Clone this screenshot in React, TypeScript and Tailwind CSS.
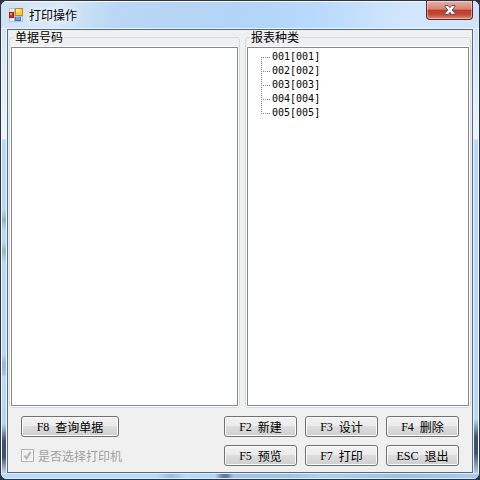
import type { ReactNode } from 'react'

interface ReportType {
  id: string
  name: string
}

const reports: ReportType[] = [
  { id: '001', name: '001' },
  { id: '002', name: '002' },
  { id: '003', name: '003' },
  { id: '004', name: '004' },
  { id: '005', name: '005' },
]

const actions = [
  { hotkey: 'F2', label: '新建' },
  { hotkey: 'F3', label: '设计' },
  { hotkey: 'F4', label: '删除' },
  { hotkey: 'F5', label: '预览' },
  { hotkey: 'F7', label: '打印' },
  { hotkey: 'ESC', label: '退出' },
]

function FormIcon() {
  return (
    <svg width="14" height="14" viewBox="0 0 14 14" shapeRendering="crispEdges" aria-hidden="true">
      <rect width="14" height="14" fill="#b9bec4" />
      <rect x="1" y="1" width="4" height="3" fill="#e9eef4" />
      <rect x="1" y="10" width="4" height="3" fill="#eef2f7" />
      <rect x="12" y="9" width="1" height="4" fill="#eef2f7" />
      <rect x="0" y="4" width="5" height="6" fill="#a31f14" />
      <rect x="1" y="5" width="3" height="4" fill="#c93324" />
      <rect x="1" y="5" width="2" height="2" fill="#f08a7c" />
      <rect x="6" y="0" width="8" height="8" fill="#c58a10" />
      <rect x="7" y="1" width="6" height="6" fill="#fbcb3d" />
      <rect x="7" y="1" width="4" height="3" fill="#ffe793" />
      <rect x="6" y="9" width="6" height="4" fill="#3f6fd0" />
      <rect x="7" y="9" width="4" height="3" fill="#6ea2f2" />
    </svg>
  )
}

function TitleBar() {
  return (
    <header className="flex h-7 items-start justify-between bg-[linear-gradient(100deg,#cfe2f6_0%,#d8e8f9_12%,#bad7f4_24%,#b1d4f7_50%,#b8dafc_66%,#d3e6fd_85%,#cfe4fb_100%)] pl-2 pr-[6px] shadow-[inset_0_1px_0_#f5faff,inset_0_-1px_0_#e4f4fb]">
      <div className="flex h-7 items-center gap-[6px]">
        <FormIcon />
        <h1 className="text-[12px] leading-4 [text-shadow:0_0_6px_#fff,0_0_8px_#fff]">打印操作</h1>
      </div>
      <button
        type="button"
        aria-label="关闭"
        className="flex h-[19px] w-[47px] items-center justify-center rounded-b-[4px] border border-t-0 border-[#5d2626] bg-[linear-gradient(#e9b0a5_0%,#d78276_46%,#b93c2a_50%,#c34a36_75%,#dc8b72_100%)] shadow-[inset_0_0_0_1px_#ffffff66]"
      >
        <svg width="12" height="10" viewBox="0 0 12 10" aria-hidden="true">
          <path
            d="M1 .5H4.2L6 2.7 7.8.5H11V1.5L8.2 5 11 8.5V9.5H7.8L6 7.3 4.2 9.5H1V8.5L3.8 5 1 1.5Z"
            fill="#fff"
            stroke="#535666"
            strokeWidth="1"
          />
        </svg>
      </button>
    </header>
  )
}

function Branch({ first, last }: { first: boolean; last: boolean }) {
  return (
    <svg width="10" height="14" viewBox="0 0 10 14" shapeRendering="crispEdges" aria-hidden="true">
      <path
        d={`M.5 ${first ? 8 : 0}V${last ? 9 : 14}M2 8.5H10`}
        fill="none"
        stroke="#808080"
        strokeDasharray="1 1"
      />
    </svg>
  )
}

function Group({ title, children }: { title: string; children?: ReactNode }) {
  return (
    <fieldset className="flex min-w-0 flex-col rounded-[3px] border border-[#d0dce4] px-px pb-px">
      <legend className="ml-[3px] px-px text-[12px] leading-[14px]">{title}</legend>
      <div className="mt-[3px] flex-1 border border-[#828790] bg-white shadow-[0_0_0_1px_#fff]">{children}</div>
    </fieldset>
  )
}

function Button({ hotkey, label }: { hotkey: string; label: string }) {
  return (
    <button
      type="button"
      className="flex h-[21px] w-full items-center justify-center gap-[6px] rounded-[3px] border border-[#707070] bg-[linear-gradient(#f2f2f2_0%,#ebebeb_49%,#dddddd_50%,#cfcfcf_100%)] text-[12px] leading-4 whitespace-nowrap shadow-[inset_0_0_0_1px_#fcfcfc]"
    >
      <span className="font-['Liberation_Serif',serif]">{hotkey}</span>
      <span>{label}</span>
    </button>
  )
}

export default function App() {
  return (
    <div className="bg-[#30343f] font-['Noto_Sans_CJK_SC',sans-serif] text-black">
      <div className="flex min-h-screen flex-col overflow-hidden rounded-[7px] border border-[#30343f] bg-[#b8dafc]">
        <TitleBar />
        <div className="flex flex-1">
          <div className="w-[6px] border-x border-[#eef6ff] bg-[linear-gradient(#d5e5f6_0px,#eff5fc_110px,#b8dafc_111px,#b8dafc_180px,#8fb8bd_191px,#b8dafc_202px,#b8dafc_213px,#93bac0_222px,#b8dafc_234px,#b8dafc_325px,#9ab8d3_334px,#a5c3df_345px,#b8dafc_348px,#b4d4f5_395px,#41526e_412px,#41526e_428px,#b1d0f0_443px)]" />
          <main className="flex min-w-0 flex-1 flex-col border border-[#5a6b78] bg-[#f0f0f0]">
            <div className="grid flex-1 grid-cols-[231fr_226fr] gap-[5px] px-px">
              <Group title="单据号码" />
              <Group title="报表种类">
                <ul className="pt-px pl-[13px] font-['DejaVu_Sans_Mono',monospace] text-[10px] leading-[15px]">
                  {reports.map((r, i) => (
                    <li key={r.id} className="flex h-[14px] gap-px">
                      <Branch first={i === 0} last={i === reports.length - 1} />
                      <span>{`${r.id}[${r.name}]`}</span>
                    </li>
                  ))}
                </ul>
              </Group>
            </div>
            <div className="flex justify-between px-[13px] pt-[8px] pb-[6px]">
              <div className="flex w-[98px] flex-col gap-2">
                <Button hotkey="F8" label="查询单据" />
                <label className="flex h-[21px] items-center gap-1 text-[12px] leading-4 whitespace-nowrap text-[#a0a0a0]">
                  <span className="grid shrink-0">
                    <input
                      type="checkbox"
                      checked
                      readOnly
                      disabled
                      className="col-start-1 row-start-1 size-[13px] appearance-none border border-[#b1b1b1] bg-[#f0f0f0] shadow-[inset_0_0_0_1px_#f8f8f8]"
                    />
                    <svg width="13" height="13" viewBox="0 0 13 13" className="col-start-1 row-start-1" aria-hidden="true">
                      <path d="M3.5 6.5L5.5 9.5L9.5 3" fill="none" stroke="#b4b4b4" strokeWidth="2" />
                    </svg>
                  </span>
                  是否选择打印机
                </label>
              </div>
              <div className="grid grid-cols-[73px_73px_73px] gap-2">
                {actions.map((a) => (
                  <Button key={a.hotkey} {...a} />
                ))}
              </div>
            </div>
          </main>
          <div className="w-[6px] border-x border-[#eef6ff] bg-[linear-gradient(#cfe4fb_0px,#eef5fd_110px,#b8dafc_111px,#b8dafc_390px,#41526e_408px,#41526e_424px,#a6c7e8_443px)]" />
        </div>
        <div className="h-[6px] border-y border-[#dcecfc] bg-[linear-gradient(90deg,#b8dafc_0px,#b8dafc_155px,#9dbcdb_170px,#b8dafc_185px,#b4d6f8_214px,#5f789b_222px,#5f789b_226px,#a3c3e4_232px,#a3c3e4_290px,#b0d0f0_320px,#9dc0e2_400px,#a9cbee_478px)]" />
      </div>
    </div>
  )
}
